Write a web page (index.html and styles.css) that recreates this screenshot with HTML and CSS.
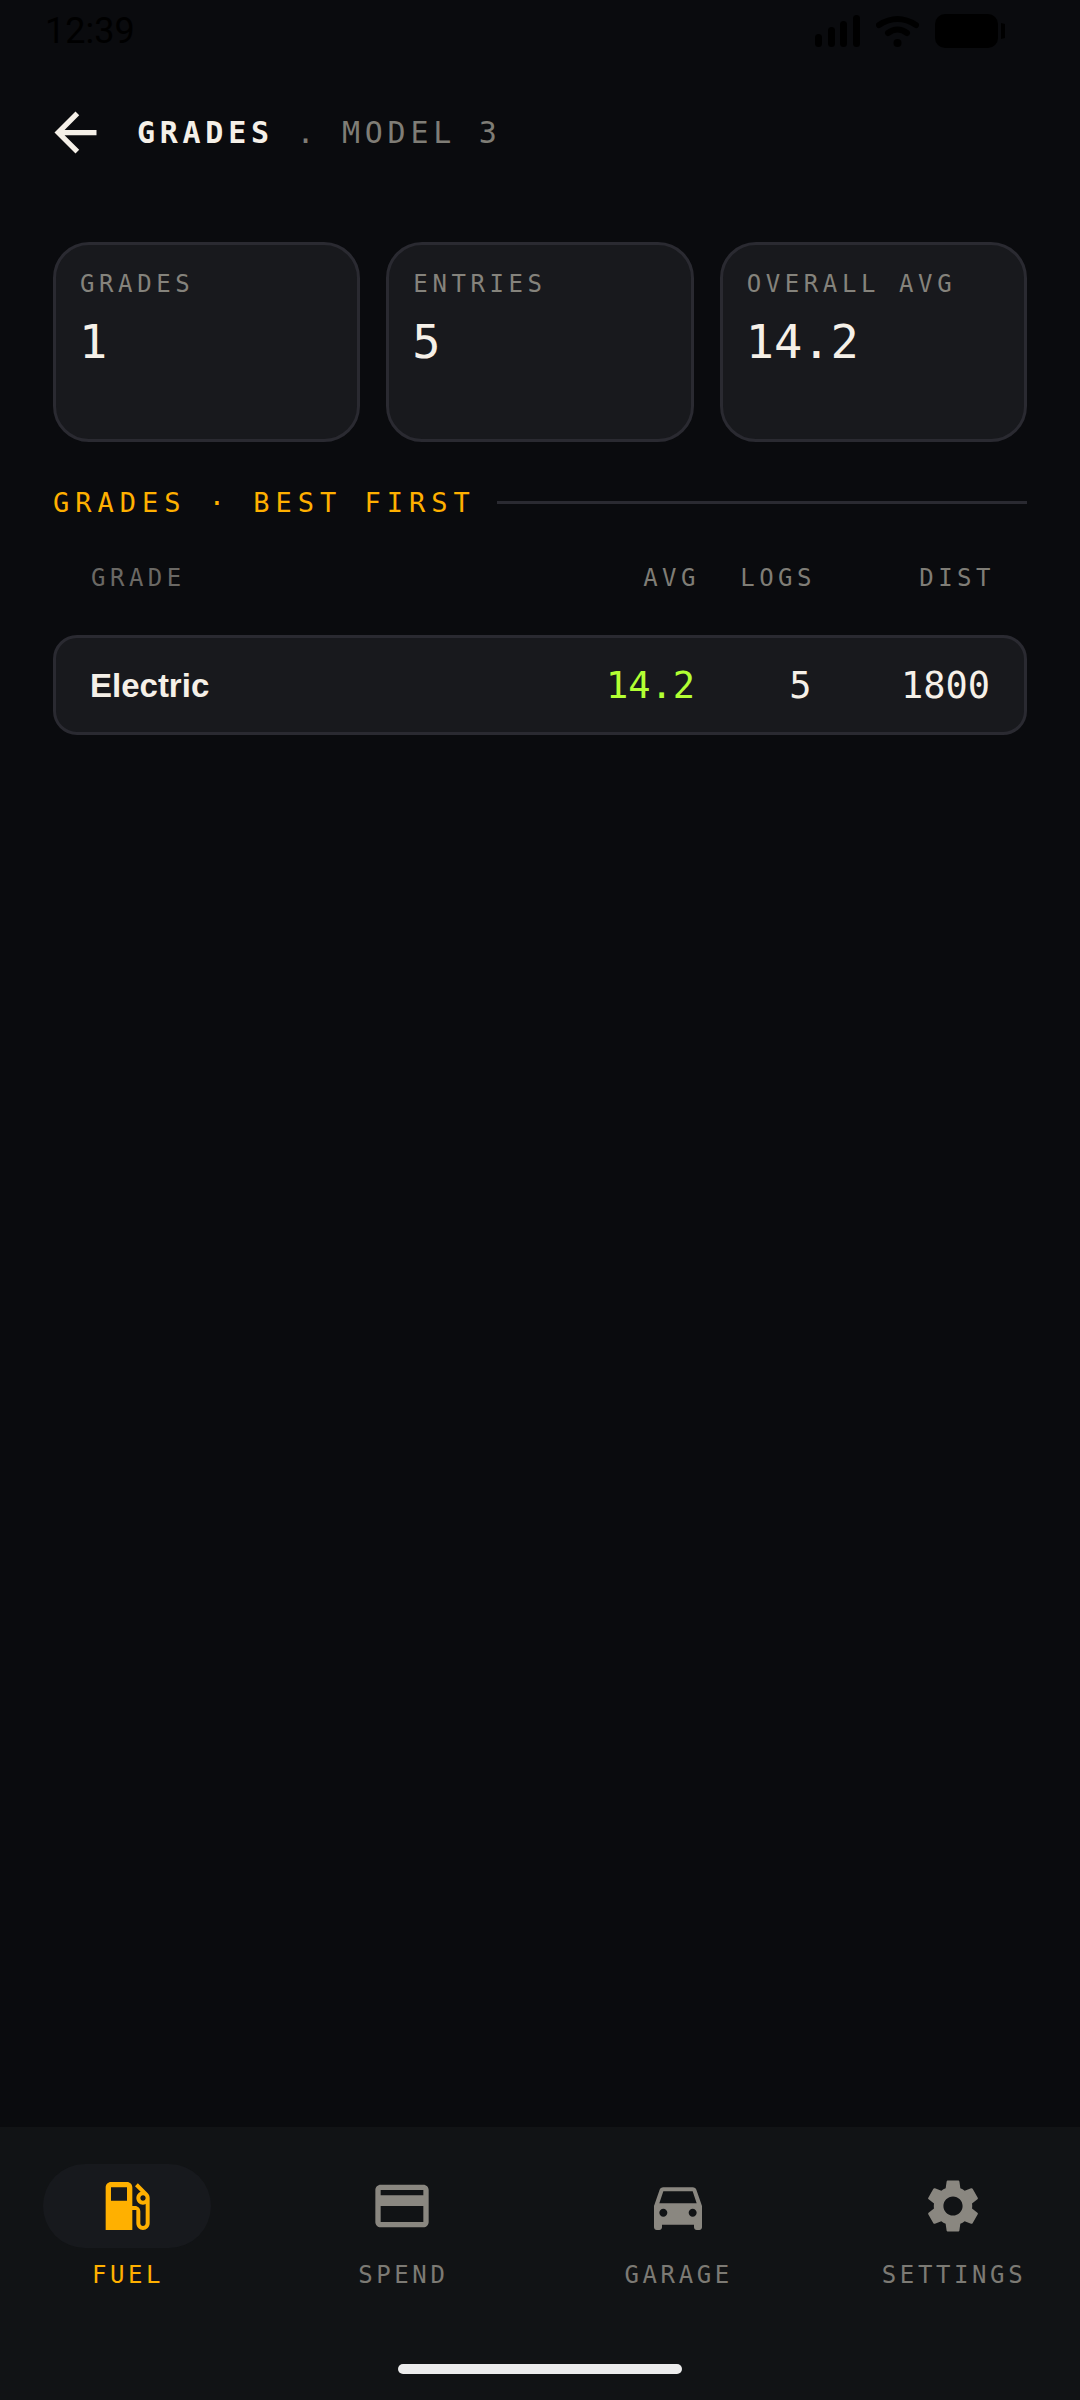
FILE: index.html
```html
<!DOCTYPE html>
<html lang="en">
<head>
    <meta charset="UTF-8">
    <meta name="viewport" content="width=device-width, initial-scale=1.0">
    <title>Grades - Model 3</title>
    <link rel="stylesheet" href="styles.css">
</head>
<body>
    <div class="status">
        <span class="time">12:39</span>
        <div class="status-icons">
            <svg class="signal" width="45" height="32" viewBox="0 0 45 32"><rect x="0" y="19" width="7" height="13" rx="3.5"/><rect x="13" y="12" width="7" height="20" rx="3.5"/><rect x="25" y="6" width="7" height="26" rx="3.5"/><rect x="38" y="0" width="7" height="32" rx="3.5"/></svg>
            <svg class="wifi" width="43" height="32" viewBox="0 0 43 32"><path d="M3 10 Q21.5 -2 40 10" fill="none" stroke="#000" stroke-width="6" stroke-linecap="round"/><path d="M12 18 Q21.5 11 31 18" fill="none" stroke="#000" stroke-width="6" stroke-linecap="round"/><circle cx="21.5" cy="28" r="4"/></svg>
            <svg class="battery" width="70" height="34" viewBox="0 0 70 34"><rect x="0" y="0" width="63" height="34" rx="10"/><path d="M66 9 L70 10 V24 L66 25 Z"/></svg>
        </div>
    </div>

    <div class="topbar">
        <svg class="back" width="63" height="63" viewBox="0 0 24 24"><path d="M20 11H7.83l5.59-5.59L12 4l-8 8 8 8 1.41-1.41L7.83 13H20v-2z"/></svg>
        <div class="title"><b>GRADES</b> . MODEL 3</div>
    </div>

    <main class="content">
        <div class="cards">
            <div class="card">
                <div class="card-label">GRADES</div>
                <div class="card-value">1</div>
            </div>
            <div class="card">
                <div class="card-label">ENTRIES</div>
                <div class="card-value">5</div>
            </div>
            <div class="card">
                <div class="card-label">OVERALL AVG</div>
                <div class="card-value">14.2</div>
            </div>
        </div>

        <div class="section">
            <span class="section-title">GRADES · BEST FIRST</span>
            <span class="section-line"></span>
        </div>

        <div class="table-head">
            <span class="head-grade">GRADE</span>
            <span>AVG</span>
            <span>LOGS</span>
            <span>DIST</span>
        </div>

        <div class="table-row">
            <span class="grade-name">Electric</span>
            <span class="num avg">14.2</span>
            <span class="num">5</span>
            <span class="num">1800</span>
        </div>
    </main>

    <nav class="nav">
        <div class="nav-items">
            <div class="nav-item active">
                <div class="pill">
                    <svg width="64" height="64" viewBox="0 0 24 24"><path d="M19.77 7.23l.01-.01-3.72-3.72L15 4.56l2.11 2.11c-.94.36-1.61 1.26-1.61 2.33 0 1.38 1.12 2.5 2.5 2.5.36 0 .69-.08 1-.21v7.21c0 .55-.45 1-1 1s-1-.45-1-1V14c0-1.1-.9-2-2-2h-1V5c0-1.1-.9-2-2-2H6c-1.1 0-2 .9-2 2v16h10v-7.5h1.5v5c0 1.38 1.12 2.5 2.5 2.5s2.5-1.12 2.5-2.5V9c0-.69-.28-1.32-.73-1.77zM12 10H6V5h6v5zm6 0c-.55 0-1-.45-1-1s.45-1 1-1 1 .45 1 1-.45 1-1 1z"/></svg>
                </div>
                <span class="nav-label">FUEL</span>
            </div>
            <div class="nav-item">
                <div class="pill">
                    <svg width="64" height="64" viewBox="0 0 24 24"><path d="M20 4H4c-1.11 0-1.99.89-1.99 2L2 18c0 1.11.89 2 2 2h16c1.11 0 2-.89 2-2V6c0-1.11-.89-2-2-2zm0 14H4v-6h16v6zm0-10H4V6h16v2z"/></svg>
                </div>
                <span class="nav-label">SPEND</span>
            </div>
            <div class="nav-item">
                <div class="pill">
                    <svg width="64" height="64" viewBox="0 0 24 24"><path d="M18.92 6.01C18.72 5.42 18.16 5 17.5 5h-11c-.66 0-1.21.42-1.42 1.01L3 12v8c0 .55.45 1 1 1h1c.55 0 1-.45 1-1v-1h12v1c0 .55.45 1 1 1h1c.55 0 1-.45 1-1v-8l-2.08-5.99zM6.5 16c-.83 0-1.5-.67-1.5-1.5S5.67 13 6.5 13s1.5.67 1.5 1.5S7.33 16 6.5 16zm11 0c-.83 0-1.5-.67-1.5-1.5s.67-1.5 1.5-1.5 1.5.67 1.5 1.5-.67 1.5-1.5 1.5zM5 11l1.5-4.5h11L19 11H5z"/></svg>
                </div>
                <span class="nav-label">GARAGE</span>
            </div>
            <div class="nav-item">
                <div class="pill">
                    <svg width="64" height="64" viewBox="0 0 24 24"><path d="M19.14 12.94c.04-.3.06-.61.06-.94 0-.32-.02-.64-.07-.94l2.03-1.58c.18-.14.23-.41.12-.61l-1.92-3.32c-.12-.22-.37-.29-.59-.22l-2.39.96c-.5-.38-1.03-.7-1.62-.94l-.36-2.54c-.04-.24-.24-.41-.48-.41h-3.84c-.24 0-.43.17-.47.41l-.36 2.54c-.59.24-1.13.57-1.62.94l-2.39-.96c-.22-.08-.47 0-.59.22L2.74 8.87c-.12.21-.08.47.12.61l2.03 1.58c-.05.3-.09.63-.09.94s.02.64.07.94l-2.03 1.58c-.18.14-.23.41-.12.61l1.92 3.32c.12.22.37.29.59.22l2.39-.96c.5.38 1.03.7 1.62.94l.36 2.54c.05.24.24.41.48.41h3.84c.24 0 .44-.17.47-.41l.36-2.54c.59-.24 1.13-.56 1.62-.94l2.39.96c.22.08.47 0 .59-.22l1.92-3.32c.12-.22.07-.47-.12-.61l-2.01-1.58zM12 15.6c-1.98 0-3.6-1.62-3.6-3.6s1.62-3.6 3.6-3.6 3.6 1.62 3.6 3.6-1.62 3.6-3.6 3.6z"/></svg>
                </div>
                <span class="nav-label">SETTINGS</span>
            </div>
        </div>
        <div class="home-bar"></div>
    </nav>
</body>
</html>
```

FILE: styles.css
```css
* {
    box-sizing: border-box;
}
html, body {
    margin: 0;
    height: 100%;
}
body {
    width: 1080px;
    height: 2400px;
    display: flex;
    flex-direction: column;
    background-color: #0a0b0e;
    color: #f5f0e8;
    font-family: "DejaVu Sans Mono", "Liberation Mono", monospace;
}
.status {
    height: 62px;
    padding: 0 75px 0 45px;
    display: flex;
    align-items: center;
    justify-content: space-between;
}
.time {
    font-family: Roboto, sans-serif;
    font-size: 36px;
    color: #000;
}
.status-icons {
    display: flex;
    align-items: center;
    gap: 16px;
}
.status-icons svg {
    display: block;
    fill: #000;
}
.topbar {
    height: 74px;
    margin-top: 33px;
    padding-left: 44px;
    display: flex;
    align-items: center;
    gap: 30px;
}
.back {
    fill: #f5f0e8;
}
.title {
    font-size: 30px;
    letter-spacing: 4.72px;
    color: #7f7d76;
}
.title b {
    color: #f5f0e8;
}
.content {
    flex: 1;
    padding: 0 53px;
}
.cards {
    margin-top: 73px;
    display: grid;
    grid-template-columns: repeat(3, 1fr);
    gap: 26px;
}
.card {
    height: 200px;
    padding: 24px 24px;
    background-color: #18191d;
    border: 3px solid #2a2a31;
    border-radius: 36px;
}
.card-label {
    font-size: 24px;
    line-height: 30px;
    letter-spacing: 4.6px;
    color: #85837c;
}
.card-value {
    margin: 12px 0 0 -1px;
    font-size: 47px;
    line-height: 62px;
}
.section {
    height: 35px;
    margin-top: 43px;
    display: flex;
    align-items: center;
    gap: 21px;
}
.section-title {
    font-size: 27px;
    letter-spacing: 6px;
    color: #ffb000;
    white-space: nowrap;
}
.section-line {
    flex: 1;
    height: 3px;
    background-color: #2a2a31;
}
.table-head {
    height: 40px;
    margin-top: 38px;
    padding: 0 32px 0 38px;
    display: grid;
    grid-template-columns: 1fr 116px 179px;
    align-items: center;
    font-size: 24px;
    letter-spacing: 4.5px;
    color: #7f7d76;
    text-align: right;
}
.table-head span:nth-child(2) {
    grid-column: 1;
    grid-row: 1;
}
.table-head .head-grade {
    grid-column: 1;
    grid-row: 1;
    text-align: left;
    color: #6a6864;
}
.table-row {
    height: 100px;
    margin-top: 37px;
    padding: 0 34px;
    display: grid;
    grid-template-columns: 1fr 116.5px 178.5px;
    align-items: center;
    background-color: #18191d;
    border: 3px solid #2a2a31;
    border-radius: 24px;
    text-align: right;
}
.table-row .grade-name {
    grid-column: 1;
    grid-row: 1;
    margin-top: 2px;
    text-align: left;
    font-family: "Liberation Sans", Arial, sans-serif;
    font-size: 33px;
    font-weight: bold;
}
.table-row .avg {
    grid-column: 1;
    grid-row: 1;
    color: #b2ff33;
}
.num {
    font-size: 37px;
}
.nav {
    height: 273px;
    padding-top: 37px;
    background-color: #111315;
}
.nav-items {
    padding: 0 43px;
    display: flex;
    justify-content: space-between;
}
.nav-item {
    width: 168px;
    display: flex;
    flex-direction: column;
    align-items: center;
    color: #8a8780;
}
.nav-item.active {
    color: #ffb000;
}
.pill {
    width: 168px;
    height: 84px;
    display: flex;
    align-items: center;
    justify-content: center;
    border-radius: 42px;
}
.pill svg {
    fill: currentColor;
}
.nav-item.active .pill {
    background-color: #17191d;
}
.nav-label {
    margin: 12px 0 0 2px;
    font-size: 24px;
    line-height: 30px;
    letter-spacing: 3.6px;
    white-space: nowrap;
    color: #7c7a74;
}
.nav-item.active .nav-label {
    color: #ffb000;
}
.home-bar {
    width: 284px;
    height: 10px;
    margin: 74px auto 0;
    background-color: #ececec;
    border-radius: 5px;
}
```
